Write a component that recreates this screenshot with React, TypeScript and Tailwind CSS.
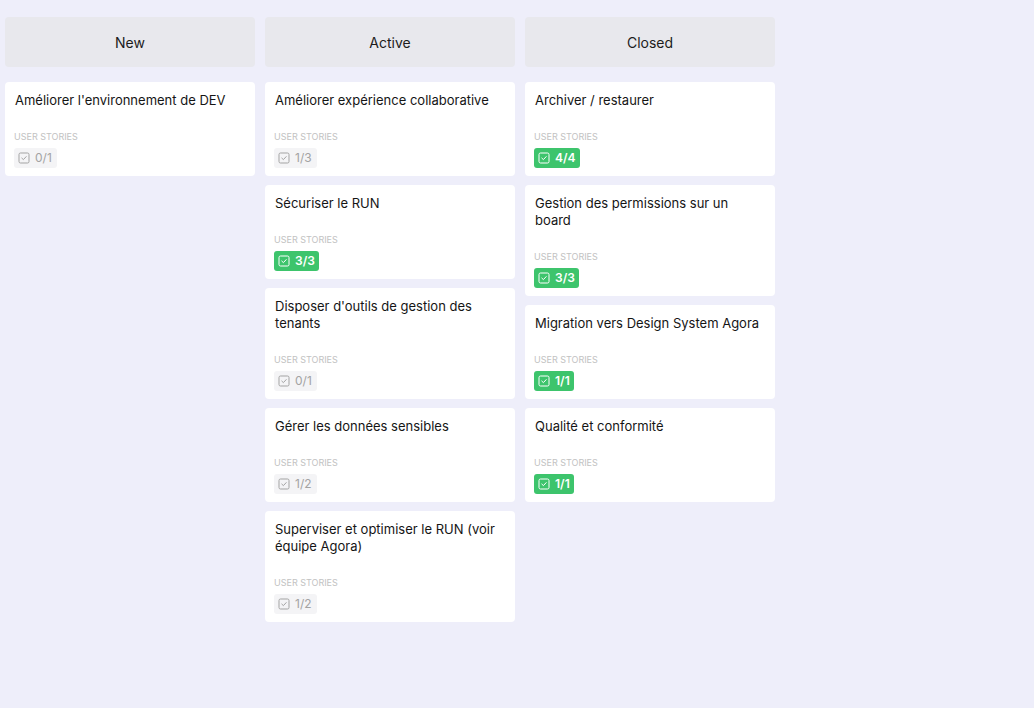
import React from 'react';

type Card = { title: string; done: number; total: number };

const columns: { name: string; cards: Card[] }[] = [
  {
    name: 'New',
    cards: [{ title: "Améliorer l'environnement de DEV", done: 0, total: 1 }],
  },
  {
    name: 'Active',
    cards: [
      { title: 'Améliorer expérience collaborative', done: 1, total: 3 },
      { title: 'Sécuriser le RUN', done: 3, total: 3 },
      { title: "Disposer d'outils de gestion des tenants", done: 0, total: 1 },
      { title: 'Gérer les données sensibles', done: 1, total: 2 },
      { title: 'Superviser et optimiser le RUN (voir équipe Agora)', done: 1, total: 2 },
    ],
  },
  {
    name: 'Closed',
    cards: [
      { title: 'Archiver / restaurer', done: 4, total: 4 },
      { title: 'Gestion des permissions sur un board', done: 3, total: 3 },
      { title: 'Migration vers Design System Agora', done: 1, total: 1 },
      { title: 'Qualité et conformité', done: 1, total: 1 },
    ],
  },
];

function CheckIcon() {
  return (
    <svg width="12" height="12" viewBox="0 0 12 12" fill="none" stroke="currentColor" strokeWidth="1">
      <rect x="1" y="1" width="10" height="10" rx="1.5" />
      <path d="M3.8 6.1l1.6 1.5 2.8-3" strokeLinecap="round" strokeLinejoin="round" />
    </svg>
  );
}

function StoryCard({ card }: { card: Card }) {
  const complete = card.done === card.total;
  return (
    <div className="bg-white rounded-[4px] pt-[10px] pb-[8px] px-[10px]">
      <div className="text-[13px] leading-[17px] text-[#151515]">{card.title}</div>
      <div className="mt-[22px] -ml-[1px] text-[9px] leading-[11px] uppercase text-[#c2c2c2]">User stories</div>
      <div className="mt-[6px] -ml-[1px] flex">
        {complete ? (
          <span className="h-[20px] flex items-center gap-[5px] pl-[4px] pr-[4px] rounded-[3px] bg-[#3dc46c] text-white text-[12px] font-semibold">
            <CheckIcon />
            {card.done}/{card.total}
          </span>
        ) : (
          <span className="h-[20px] flex items-center gap-[5px] pl-[4px] pr-[5px] rounded-[3px] bg-[#f4f4f6] text-[#a3a3a3] text-[12px]">
            <CheckIcon />
            {card.done}/{card.total}
          </span>
        )}
      </div>
    </div>
  );
}

export default function App() {
  return (
    <div
      className="min-h-screen w-full bg-[#eeeefa] pt-[17px] pl-[5px]"
      style={{ fontFamily: 'Inter, "Noto Sans", sans-serif' }}
    >
      <div className="flex gap-[10px] items-start">
        {columns.map((col) => (
          <div key={col.name} className="w-[250px] flex flex-col">
            <div className="h-[50px] pt-[1px] rounded-[4px] bg-[#e8e8ed] flex items-center justify-center text-[14px] text-[#1c1c1c]">
              {col.name}
            </div>
            <div className="mt-[15px] flex flex-col gap-[9px]">
              {col.cards.map((c) => (
                <StoryCard key={c.title} card={c} />
              ))}
            </div>
          </div>
        ))}
      </div>
    </div>
  );
}
